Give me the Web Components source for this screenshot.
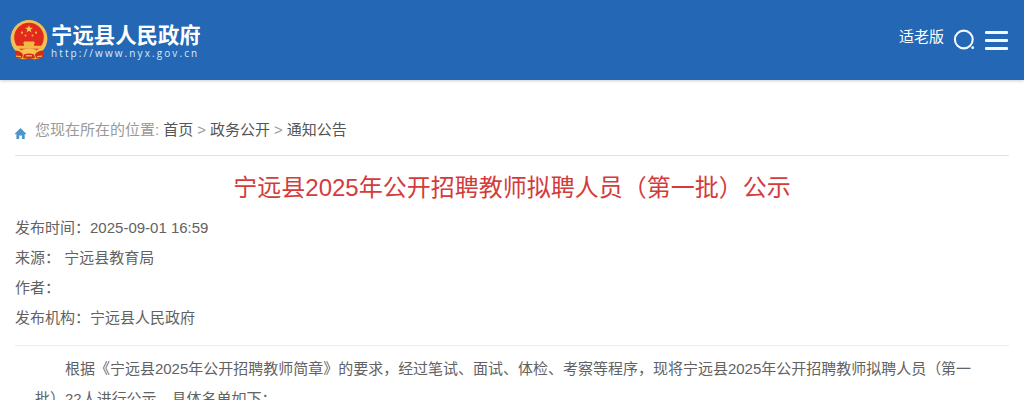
<!DOCTYPE html>
<html lang="zh-CN">
<head>
<meta charset="utf-8">
<title>宁远县人民政府</title>
<style>
  body {
    margin: 0;
    height: 400px;
    overflow: hidden;
    background: #fff;
    color: #626262;
    font: 15px/30px "Liberation Sans", "Noto Sans CJK SC", sans-serif;
  }
</style>
</head>
<body>
<site-header></site-header>
<article-page>
  <bread-crumb slot="crumb"></bread-crumb>
  <span slot="title">宁远县2025年公开招聘教师拟聘人员（第一批）公示</span>
  <meta-line slot="meta" label="发布时间：">2025-09-01 16:59</meta-line>
  <meta-line slot="meta" label="来源：">&nbsp;宁远县教育局</meta-line>
  <meta-line slot="meta" label="作者："></meta-line>
  <meta-line slot="meta" label="发布机构：">宁远县人民政府</meta-line>
  <span>根据《宁远县2025年公开招聘教师简章》的要求，经过笔试、面试、体检、考察等程序，现将宁远县2025年公开招聘教师拟聘人员（第一批）22人进行公示。具体名单如下：</span>
</article-page>

<script>
class SiteLogo extends HTMLElement {
  constructor() {
    super();
    this.attachShadow({ mode: 'open' }).innerHTML = `
      <style>
        :host { display: flex; align-items: flex-start; gap: 3px; color: #fff; }
        svg { display: block; width: 38px; height: 40px; }
        .name { margin-top: 1px; font: bold 21.4px/25px "Noto Sans CJK SC", sans-serif; height: 27px; white-space: nowrap; }
        .url { font: 10px/11px "Open Sans", sans-serif; letter-spacing: 2.1px; white-space: nowrap; color: #dcebfa; }
      </style>
      <svg viewBox="0 0 38 40">
        <circle cx="19" cy="18.500" r="18.400" fill="#f2bf55"/>
        <path d="M5 31h28l-1 6q-6 4-13 1-7 3-13-1z" fill="#eeb649"/>
        <circle cx="19" cy="17.500" r="14.800" fill="#e02a1d"/>
        <path d="m19 5 1 2.700h3l-2.400 1.800.9 3-2.500-1.800-2.500 1.800.9-3L15 7.700h3z" fill="#f8c95a"/>
        <g fill="#f3b944">
          <circle cx="12" cy="12.700" r="1.100"/><circle cx="26" cy="12.700" r="1.100"/>
          <circle cx="15.500" cy="15.500" r="1"/><circle cx="22.500" cy="15.500" r="1"/>
          <path d="M14 21.500h10l1 2.200h-1v2h7.500v3h-25v-3H14v-2h-1z"/>
        </g>
        <path d="M5 30.500q5 0 8 4l-1 3.500q-4 1.500-7-1zm28 0q-5 0-8 4l1 3.500q4 1.500 7-1z" fill="#d9291c"/>
        <path d="M11 30q8-3 16 0l-3 4H14z" fill="#f5c550"/>
        <path d="M14 34.500q5-2 10 0l1 3.500q-6 1.500-12 0z" fill="#d9291c"/>
        <path d="M16 35h6v1.500h-6zM6 35.500l5 .5v1.200l-5-.5zm26 0-5 .5v1.200l5-.5z" fill="#eeb649"/>
      </svg>
      <div>
        <div class="name">宁远县人民政府</div>
        <div class="url">http://www.nyx.gov.cn</div>
      </div>
    `;
  }
}

class SiteHeader extends HTMLElement {
  constructor() {
    super();
    this.attachShadow({ mode: 'open' }).innerHTML = `
      <style>
        :host {
          display: flex; justify-content: space-between; box-sizing: border-box;
          height: 80px; padding: 20px 16px 0 10px;
          background: #2367b5; box-shadow: 0 1px 3px rgba(0, 0, 0, .2); color: #fff;
        }
        .tools { display: flex; align-items: flex-start; }
        .elder { margin: 2px 9px 0 0; }
        .search { width: 22px; height: 22px; margin: 9px 10px 0 0; }
        .menu { width: 23px; height: 20px; margin-top: 11px; }
        svg { display: block; }
      </style>
      <site-logo></site-logo>
      <div class="tools">
        <span class="elder">适老版</span>
        <svg class="search" viewBox="0 0 22 22"><circle cx="10.800" cy="10.500" r="8.900" fill="none" stroke="#f2f8ff" stroke-width="2.100"/><circle cx="19.700" cy="18.700" r="1.400" fill="#f2f8ff"/></svg>
        <svg class="menu" viewBox="0 0 23 20" fill="#f2f8ff"><rect width="23" height="3" rx="1"/><rect y="8" width="23" height="3" rx="1"/><rect y="16" width="23" height="3" rx="1"/></svg>
      </div>
    `;
  }
}

class BreadCrumb extends HTMLElement {
  constructor() {
    super();
    this.attachShadow({ mode: 'open' }).innerHTML = `
      <style>
        :host { display: flex; height: 40px; border-bottom: 1px solid #e1e1e1; color: #999; white-space: nowrap; }
        svg { width: 11px; height: 11px; margin: 13px 9px 0 0; }
        div { word-spacing: -.15px; }
        a { color: #555; }
      </style>
      <svg viewBox="0 0 11 11"><path d="M5.500 0 11 5.500v.7H9.700V11H6.900V7.500H4.200V11H1.400V6.200H0v-.7z" fill="#4c97c8"/></svg>
      <div>您现在所在的位置: <a>首页</a> &gt; <a>政务公开</a> &gt; <a>通知公告</a></div>
    `;
  }
}

class MetaLine extends HTMLElement {
  constructor() {
    super();
    this.attachShadow({ mode: 'open' }).innerHTML = `
      <style>
        :host { display: block; height: 30px; }
      </style>
      <span></span><slot></slot>
    `;
  }

  connectedCallback() {
    this.shadowRoot.querySelector('span').textContent = this.getAttribute('label');
  }
}

class ArticlePage extends HTMLElement {
  constructor() {
    super();
    this.attachShadow({ mode: 'open' }).innerHTML = `
      <style>
        :host { display: block; padding: 35px 15px 0; }
        h1 { margin: 12px 0 5px; font-size: 24px; font-weight: normal; line-height: 40px; text-align: center; color: #d43b3b; }
        .meta { height: 132px; border-bottom: 1px solid #ececec; }
        p { margin: 8px 20px 0; text-indent: 2em; letter-spacing: -.01px; }
      </style>
      <slot name="crumb"></slot>
      <h1><slot name="title"></slot></h1>
      <div class="meta"><slot name="meta"></slot></div>
      <p><slot></slot></p>
    `;
  }
}

customElements.define('site-logo', SiteLogo);
customElements.define('site-header', SiteHeader);
customElements.define('bread-crumb', BreadCrumb);
customElements.define('meta-line', MetaLine);
customElements.define('article-page', ArticlePage);
</script>
</body>
</html>
